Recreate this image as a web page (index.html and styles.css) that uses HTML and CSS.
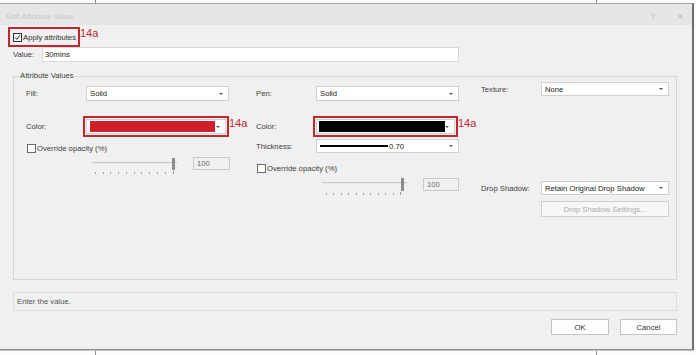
FILE: index.html
```html
<!DOCTYPE html>
<html>
<head>
<meta charset="utf-8">
<link rel="stylesheet" href="styles.css">
</head>
<body>
<div class="dialog">
  <div class="titlebar">
    <span class="title">Edit Attribute Value</span>
    <span class="tb-btns"><span class="help">?</span><span class="close">✕</span></span>
  </div>
  <div class="body">
    <div class="apply-row">
      <div class="apply">
        <span class="cb dark"><svg width="7" height="7" viewBox="0 0 7 7"><polyline points="1,3.6 2.8,5.4 6,1.2" fill="none" stroke="#222" stroke-width="1"/></svg></span>
        <span class="apply-lbl">Apply attributes</span>
      </div>
      <span class="tag">14a</span>
    </div>
    <div class="value-row">
      <span class="value-lbl">Value:</span>
      <div class="input">30mins</div>
    </div>
    <div class="group">
      <span class="legend">Attribute Values</span>
      <div class="cols">
        <div class="col">
          <div class="row r-first">
            <span class="lbl">Fill:</span>
            <div class="select w143"><span class="stext">Solid</span><span class="arrow"></span></div>
          </div>
          <div class="row r-color">
            <span class="lbl lbl-c">Color:</span>
            <div class="redbox"><div class="select w140"><span class="swatch red"></span><span class="arrow"></span></div></div>
            <span class="tag tag-sm">14a</span>
          </div>
          <div class="row r-cb1">
            <span class="cb"></span><span class="cb-lbl">Override opacity (%)</span>
          </div>
          <div class="row r-slider1">
            <svg class="slider" width="85" height="18" viewBox="0 0 85 18">
              <rect x="0" y="5" width="85" height="1" fill="#c9c9c9"/>
              <rect x="0" y="6" width="85" height="1" fill="#e9e9e9"/>
              <rect x="80" y="1" width="3" height="12" fill="#8c8c8c"/>
              <g fill="#9a9a9a">
                <rect x="3" y="15" width="1" height="2"/><rect x="11" y="15" width="1" height="2"/><rect x="18" y="15" width="1" height="2"/><rect x="26" y="15" width="1" height="2"/><rect x="34" y="15" width="1" height="2"/><rect x="42" y="15" width="1" height="2"/><rect x="49" y="15" width="1" height="2"/><rect x="57" y="15" width="1" height="2"/><rect x="65" y="15" width="1" height="2"/><rect x="73" y="15" width="1" height="2"/><rect x="81" y="14" width="1" height="3"/>
              </g>
            </svg>
            <div class="numbox nb1">100</div>
          </div>
        </div>
        <div class="col">
          <div class="row r-first">
            <span class="lbl">Pen:</span>
            <div class="select w143"><span class="stext">Solid</span><span class="arrow"></span></div>
          </div>
          <div class="row r-color">
            <span class="lbl lbl-c">Color:</span>
            <div class="redbox"><div class="select w139"><span class="swatch black"></span><span class="arrow"></span></div></div>
            <span class="tag tag-sm">14a</span>
          </div>
          <div class="row r-thick">
            <span class="lbl">Thickness:</span>
            <div class="select w143 h14"><span class="line"></span><span class="thick-val">0.70</span><span class="arrow"></span></div>
          </div>
          <div class="row r-cb2">
            <span class="cb"></span><span class="cb-lbl">Override opacity (%)</span>
          </div>
          <div class="row r-slider2">
            <svg class="slider" width="85" height="18" viewBox="0 0 85 18">
              <rect x="0" y="5" width="85" height="1" fill="#c9c9c9"/>
              <rect x="0" y="6" width="85" height="1" fill="#e9e9e9"/>
              <rect x="79" y="1" width="3" height="13" fill="#8c8c8c"/>
              <g fill="#9a9a9a">
                <rect x="4" y="16" width="1" height="2"/><rect x="11" y="16" width="1" height="2"/><rect x="19" y="16" width="1" height="2"/><rect x="26" y="16" width="1" height="2"/><rect x="34" y="16" width="1" height="2"/><rect x="41" y="16" width="1" height="2"/><rect x="48" y="16" width="1" height="2"/><rect x="56" y="16" width="1" height="2"/><rect x="63" y="16" width="1" height="2"/><rect x="71" y="16" width="1" height="2"/><rect x="78" y="15" width="1" height="3"/>
              </g>
            </svg>
            <div class="numbox nb2">100</div>
          </div>
        </div>
        <div class="col">
          <div class="row r-tex">
            <span class="lbl">Texture:</span>
            <div class="select w128 h14"><span class="stext">None</span><span class="arrow"></span></div>
          </div>
          <div class="row r-drop">
            <span class="lbl">Drop Shadow:</span>
            <div class="select w128 h14"><span class="stext">Retain Original Drop Shadow</span><span class="arrow"></span></div>
          </div>
          <div class="row r-dsbtn">
            <div class="ds-btn">Drop Shadow Settings...</div>
          </div>
        </div>
      </div>
    </div>
    <div class="status">Enter the value.</div>
    <div class="buttons">
      <div class="btn ok">OK</div>
      <div class="btn cancel">Cancel</div>
    </div>
  </div>
</div>
</body>
</html>
```

FILE: styles.css
```css
* { box-sizing: border-box; }
html, body { margin: 0; padding: 0; }
body {
  width: 696px;
  height: 355px;
  overflow: hidden;
  padding-top: 3px;
  background-color: #fbfbf9;
  background-image: linear-gradient(to right, transparent 95px, #8d8d8d 95px, #8d8d8d 96px, transparent 96px, transparent 596px, #8d8d8d 596px, #8d8d8d 597px, transparent 597px);
  font-family: "Liberation Sans", Arial, sans-serif;
  font-size: 7.7px;
  color: #3e3e3e;
}
.dialog {
  width: 694px;
  height: 347px;
  background: #f0f0f0;
  border-top: 1px solid #a3a3a3;
  border-right: 2px solid #6e6e6e;
  border-bottom: 1px solid #8a8a8a;
  box-shadow: 0 1px 0 #c4c4c4;
  display: flex;
  flex-direction: column;
}
.titlebar {
  height: 21px;
  flex: none;
  background: #e6e6e6;
  display: flex;
  align-items: center;
  padding: 3px 8px 0 6px;
  color: #c6c6c6;
  font-size: 8px;
}
.tb-btns { margin-left: auto; display: flex; gap: 22px; color: #b9b9b9; font-size: 8px; }
.body {
  flex: 1;
  padding: 2px 15px 0 13px;
  display: flex;
  flex-direction: column;
}
.apply-row { display: flex; align-items: flex-start; height: 20px; margin-left: -5px; flex: none; }
.apply {
  display: flex;
  align-items: center;
  height: 20px;
  border: 2px solid #c3262c;
  padding: 0 2px 0 3px;
}
.cb {
  width: 9px;
  height: 9px;
  flex: none;
  background: #fff;
  border: 1px solid #6a6a6a;
  display: flex;
  align-items: center;
  justify-content: center;
}
.cb.dark { border-color: #333; }
.apply-lbl { margin-left: 1px; color: #333; }
.tag {
  font-size: 11px;
  line-height: 12px;
  color: #c3262c;
}
.value-row { display: flex; align-items: center; height: 15px; flex: none; }
.value-lbl { width: 29px; }
.input {
  width: 417px;
  height: 15px;
  background: #fff;
  border: 1px solid #d8d8d8;
  padding-left: 2px;
  display: flex;
  align-items: center;
  color: #222;
}
.group {
  position: relative;
  margin-top: 14px;
  height: 204px;
  flex: none;
  border: 1px solid #d6d6d6;
}
.legend {
  position: absolute;
  top: -6px;
  left: 5px;
  padding: 0 1px;
  line-height: 10px;
  background: #f0f0f0;
}
.cols {
  display: grid;
  grid-template-columns: 230px 225px 1fr;
  padding-left: 12px;
}
.col { display: flex; flex-direction: column; }
.row { display: flex; align-items: center; }
.lbl { width: 60px; flex: none; }
.lbl-c { width: 57px; }
.select {
  height: 15px;
  background: #fff;
  border: 1px solid #d0d0d0;
  display: flex;
  align-items: center;
  padding-left: 3px;
  color: #222;
}
.h14 { height: 14px; }
.w143 { width: 143px; }
.w140 { width: 140px; }
.w139 { width: 139px; }
.w128 { width: 128px; }
.arrow {
  margin-left: auto;
  margin-right: 5px;
  width: 0;
  height: 0;
  border-left: 2px solid transparent;
  border-right: 2px solid transparent;
  border-top: 2px solid #555;
  flex: none;
}
.r-first { margin-top: 9px; height: 15px; }
.r-color { margin-top: 15px; align-items: flex-start; }
.r-color .lbl { height: 21px; display: flex; align-items: center; }
.redbox { border: 2px solid #c3262c; padding: 1px; }
.swatch { height: 11px; flex: none; }
.swatch.red { width: 125px; background: #cd2029; margin-left: 0; }
.swatch.black { width: 126px; background: #000; margin-left: -1px; }
.tag-sm { margin-top: 1px; }
.r-cb1 { margin-top: 6px; height: 10px; padding-left: 1px; }
.cb-lbl { margin-left: 1px; }
.r-slider1 { margin-top: 4px; align-items: flex-start; }
.slider { display: block; margin-left: 66px; flex: none; }
.numbox {
  height: 13px;
  background: #f0f0f0;
  border: 1px solid #c9c9c9;
  color: #6a6a6a;
  padding-left: 3px;
  display: flex;
  align-items: center;
  flex: none;
}
.nb1 { margin-left: 16px; width: 37px; }
.nb2 { margin-left: 16px; width: 36px; margin-top: 1px; }
.r-thick { margin-top: 2px; height: 14px; }
.line { width: 68px; height: 2px; background: #000; flex: none; }
.thick-val { margin-left: 1px; }
.r-cb2 { margin-top: 10px; height: 10px; padding-left: 1px; }
.r-slider2 { margin-top: 4px; align-items: flex-start; }
.r-tex { margin-top: 5px; height: 14px; }
.r-drop { margin-top: 85px; height: 14px; }
.r-dsbtn { margin-top: 6px; }
.ds-btn {
  margin-left: 60px;
  width: 128px;
  height: 16px;
  background: #f7f7f7;
  border: 1px solid #cfcfcf;
  color: #ababab;
  display: flex;
  align-items: center;
  justify-content: center;
}
.status {
  margin-top: 12px;
  height: 19px;
  flex: none;
  border: 1px solid #dcdcdc;
  padding-left: 3px;
  display: flex;
  align-items: center;
  color: #555;
}
.buttons {
  margin-top: 8px;
  display: flex;
  justify-content: flex-end;
  gap: 11px;
  flex: none;
}
.btn {
  height: 16px;
  background: #fdfdfd;
  border: 1px solid #c4c4c4;
  display: flex;
  align-items: center;
  justify-content: center;
  color: #333;
}
.ok { width: 58px; }
.cancel { width: 57px; }
```
